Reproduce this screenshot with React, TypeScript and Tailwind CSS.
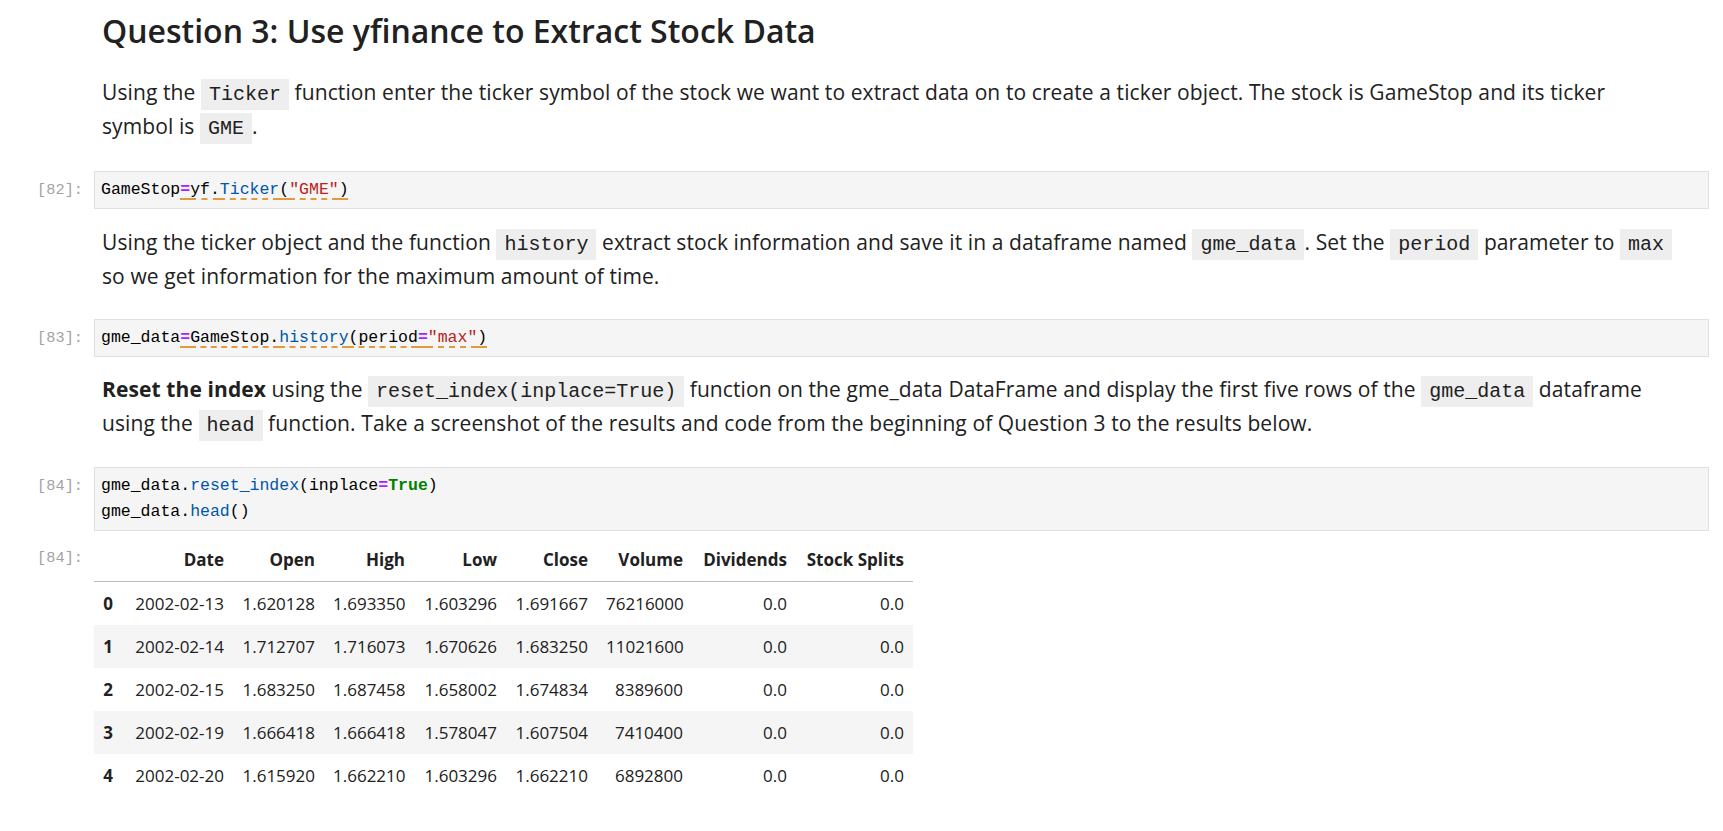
import React from "react"

const rows = [
  ["0", "2002-02-13", "1.620128", "1.693350", "1.603296", "1.691667", "76216000", "0.0", "0.0"],
  ["1", "2002-02-14", "1.712707", "1.716073", "1.670626", "1.683250", "11021600", "0.0", "0.0"],
  ["2", "2002-02-15", "1.683250", "1.687458", "1.658002", "1.674834", "8389600", "0.0", "0.0"],
  ["3", "2002-02-19", "1.666418", "1.666418", "1.578047", "1.607504", "7410400", "0.0", "0.0"],
  ["4", "2002-02-20", "1.615920", "1.662210", "1.603296", "1.662210", "6892800", "0.0", "0.0"],
]

const headers = ["", "Date", "Open", "High", "Low", "Close", "Volume", "Dividends", "Stock Splits"]
const widths = ["w-[28px]", "w-[111px]", "w-[91px]", "w-[90px]", "w-[92px]", "w-[91px]", "w-[95px]", "w-[104px]", "w-[117px]"]

function Code({ children }: { children: React.ReactNode }) {
  return (
    <code className="font-['Liberation_Mono',monospace] text-[20px] leading-none tracking-normal bg-[#eeeeee] px-[8px] py-[4px] text-[#212121]">
      {children}
    </code>
  )
}

function Prompt({ n, className = "" }: { n?: number; className?: string }) {
  return (
    <div
      className={`w-[94px] shrink-0 pr-[11px] text-right font-['Liberation_Mono',monospace] text-[15.3px] leading-[26px] text-[#a3a3a3] ${className}`}
    >
      {n !== undefined ? `[${n}]:` : ""}
    </div>
  )
}

function CodeCell({ n, children, className = "" }: { n: number; children: React.ReactNode; className?: string }) {
  return (
    <div className={`flex ${className}`}>
      <Prompt n={n} className="pt-[6px]" />
      <div className="flex-1 border border-[#e0e0e0] bg-[#f5f5f5] px-[6px] py-[5px] font-['Liberation_Mono',monospace] text-[16.5px] leading-[26px] text-black whitespace-pre">
        {children}
      </div>
    </div>
  )
}

const eq = <span className="text-[#aa22ff] font-bold">=</span>
const lint = "underline decoration-dashed decoration-[#e39a3f] decoration-[1.5px] underline-offset-[4px]"
const text = "text-[21px] leading-[33.5px] whitespace-nowrap tracking-[0.1px]"

export default function App() {
  return (
    <div className="min-h-screen w-full bg-white pr-[14px] font-['Open_Sans',sans-serif] text-[#212121]">
      {/* heading + intro */}
      <div className="flex">
        <Prompt />
        <div className="flex-1 pl-[8px]">
          <h2 className="mt-[13px] text-[32px] font-semibold leading-[36px]">
            Question 3: Use yfinance to Extract Stock Data
          </h2>
          <p className={`mt-[27px] ${text}`}>
            Using the <Code>Ticker</Code> function enter the ticker symbol of the stock we want to extract data on to
            create a ticker object. The stock is GameStop and its ticker
            <br />
            symbol is <Code>GME</Code>.
          </p>
        </div>
      </div>

      <CodeCell n={82} className="mt-[28px]">
        GameStop
        <span className={lint}>
          {eq}yf.<span className="text-[#0055aa]">Ticker</span>(<span className="text-[#ba2121]">"GME"</span>)
        </span>
      </CodeCell>

      <div className="flex">
        <Prompt />
        <p className={`flex-1 pl-[8px] mt-[17px] ${text}`}>
          Using the ticker object and the function <Code>history</Code> extract stock information and save it in a
          dataframe named <Code>gme_data</Code>. Set the <Code>period</Code> parameter to <Code>max</Code>
          <br />
          so we get information for the maximum amount of time.
        </p>
      </div>

      <CodeCell n={83} className="mt-[26px]">
        gme_data
        <span className={lint}>
          {eq}GameStop.<span className="text-[#0055aa]">history</span>(period{eq}
          <span className="text-[#ba2121]">"max"</span>)
        </span>
      </CodeCell>

      <div className="flex">
        <Prompt />
        <p className={`flex-1 pl-[8px] mt-[16px] ${text}`}>
          <b className="font-bold">Reset the index</b> using the <Code>reset_index(inplace=True)</Code> function on the
          gme_data DataFrame and display the first five rows of the <Code>gme_data</Code> dataframe
          <br />
          using the <Code>head</Code> function. Take a screenshot of the results and code from the beginning of
          Question 3 to the results below.
        </p>
      </div>

      <CodeCell n={84} className="mt-[27px]">
        {"gme_data."}
        <span className="text-[#0055aa]">reset_index</span>(inplace{eq}
        <span className="font-bold text-[#008000]">True</span>)
        {"\n"}
        {"gme_data."}
        <span className="text-[#0055aa]">head</span>()
      </CodeCell>

      {/* output */}
      <div className="flex pt-[7px] pb-[30px]">
        <Prompt n={84} className="pt-[7px]" />
        <table className="w-[819px] table-fixed border-collapse text-[17px] leading-[25px] text-[#212121]">
          <thead>
            <tr className="border-b border-[#bdbdbd]">
              {headers.map((h, i) => (
                <th key={i} className={`${widths[i]} px-[9px] py-[9px] text-right font-bold whitespace-nowrap`}>
                  {h}
                </th>
              ))}
            </tr>
          </thead>
          <tbody>
            {rows.map((r, ri) => (
              <tr key={ri} className={ri % 2 === 1 ? "bg-[#f5f5f5]" : "bg-white"}>
                {r.map((c, ci) =>
                  ci === 0 ? (
                    <th key={ci} className="px-[9px] py-[9px] text-right font-bold">
                      {c}
                    </th>
                  ) : (
                    <td key={ci} className="px-[9px] py-[9px] text-right whitespace-nowrap">
                      {c}
                    </td>
                  )
                )}
              </tr>
            ))}
          </tbody>
        </table>
      </div>
    </div>
  )
}
